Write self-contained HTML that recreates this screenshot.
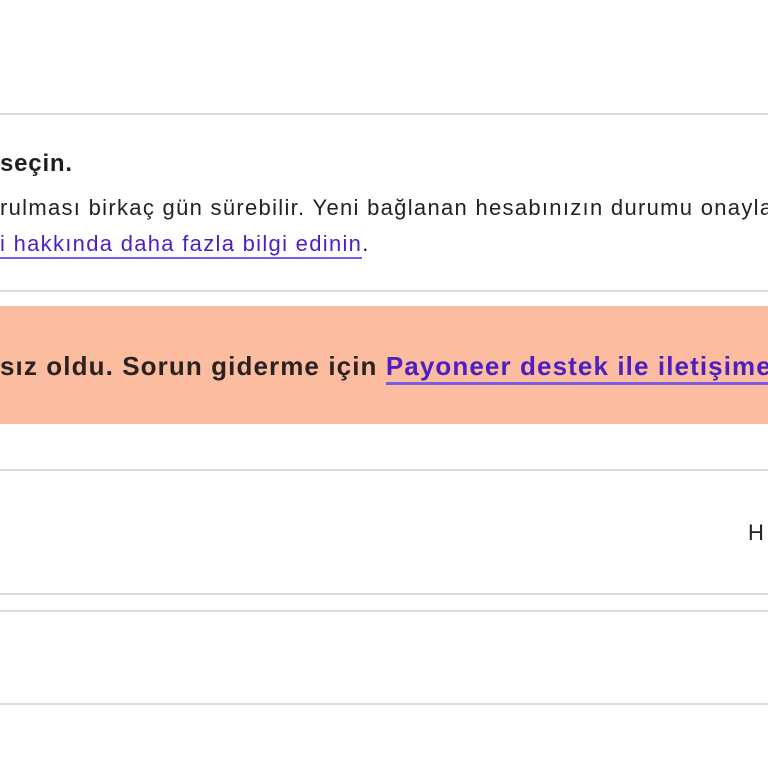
<!DOCTYPE html>
<html><head><meta charset="utf-8"><style>
html,body{margin:0;padding:0;width:768px;height:768px;overflow:hidden;background:#fff;font-family:"Liberation Sans",sans-serif;color:#222}
#w{position:relative;width:768px;height:768px;overflow:hidden}
.l{position:absolute;left:0;width:768px;height:2px;background:#dcdcdc}
.t{position:absolute;white-space:nowrap;left:0;max-width:768px;overflow:hidden}
a{color:#4d1fc2;text-decoration:none;border-bottom:2px solid #7a5ae6}
</style></head><body><div id="w">
<div class="t" style="top:150px;font-size:24px;font-weight:bold;color:#1f1f1f;letter-spacing:0.8px">seçin.</div>
<div class="l" style="top:113px"></div>
<div class="t" style="top:195px;font-size:22px;letter-spacing:1.3px">rulması birkaç gün sürebilir. Yeni bağlanan hesabınızın durumu onaylandı</div>
<div class="t" style="top:231px;font-size:22px;letter-spacing:1.3px;padding-bottom:4px"><a style="padding-bottom:1px">i hakkında daha fazla bilgi edinin</a>.</div>
<div class="l" style="top:290px"></div>
<div style="position:absolute;left:0;top:306px;width:768px;height:118px;background:#fbbca0"></div>
<div class="t" style="top:351px;font-size:26px;font-weight:bold;color:#2a2220;letter-spacing:1.1px;padding-bottom:4px"><span>sız oldu. Sorun giderme için </span><a style="border-bottom-width:3px;padding-bottom:1px">Payoneer destek ile iletişime geçin</a></div>
<div class="l" style="top:469px"></div>
<div class="t" style="top:520px;left:748px;font-size:22px;max-width:20px">H</div>
<div class="l" style="top:593px"></div>
<div class="l" style="top:610px"></div>
<div class="l" style="top:703px"></div>
</div></body></html>
